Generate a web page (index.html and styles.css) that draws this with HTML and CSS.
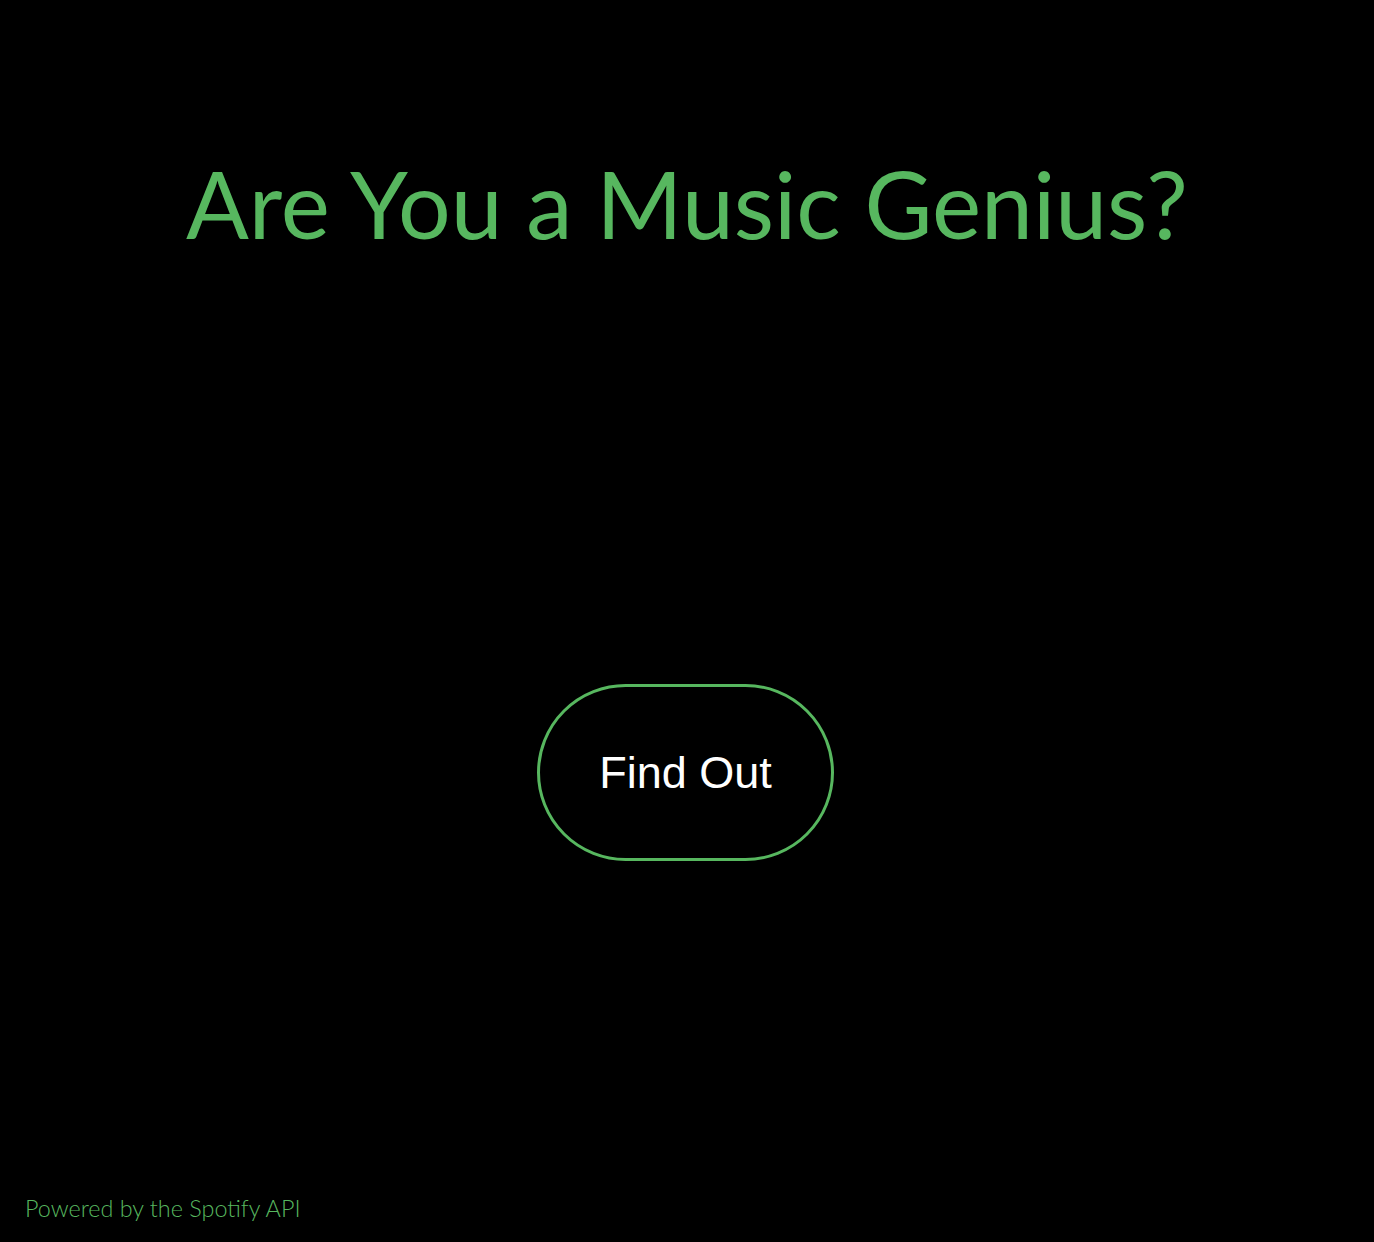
FILE: index.html
```html
<!DOCTYPE html>
<html lang="en">
<head>
<meta charset="utf-8">
<title>Are You a Music Genius?</title>
<link rel="stylesheet" href="styles.css">
</head>
<body>
<main class="page">
  <h1 class="title">Are You a Music Genius?</h1>
  <div class="action">
    <button class="find-btn" type="button">Find Out</button>
  </div>
  <footer class="footer">Powered by the Spotify API</footer>
</main>
</body>
</html>
```

FILE: styles.css
```css
html, body {
  margin: 0;
  padding: 0;
  background: #000;
  height: 100%;
}
.page {
  display: flex;
  flex-direction: column;
  align-items: center;
  height: 1242px;
  box-sizing: border-box;
  font-family: Lato, "Liberation Sans", sans-serif;
}
.title {
  margin: 145px 0 0;
  font-family: Lato, sans-serif;
  font-weight: 400;
  font-size: 93px;
  line-height: 116px;
  color: #57b75f;
  letter-spacing: 0;
}
.action {
  margin-top: 423px;
  margin-right: 3px;
  display: flex;
  justify-content: center;
}
.find-btn {
  width: 297px;
  height: 177px;
  border: 3px solid #57b75f;
  border-radius: 90px;
  background: #000;
  color: #fff;
  font-family: "Liberation Sans", Arial, sans-serif;
  font-size: 45px;
  padding: 0;
  cursor: pointer;
}
.footer {
  margin-top: auto;
  align-self: flex-start;
  padding: 0 0 20px 25px;
  font-family: Lato, sans-serif;
  font-weight: 300;
  font-size: 23.4px;
  color: #57b75f;
}
```
